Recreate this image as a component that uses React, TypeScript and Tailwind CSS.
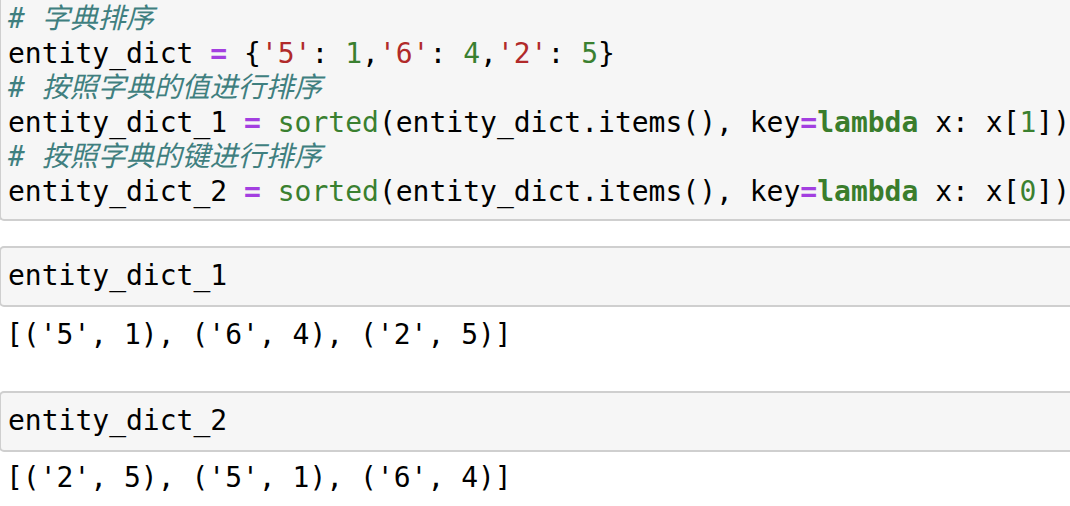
import React from 'react';

const mono = "font-['DejaVu_Sans_Mono','Noto_Sans_CJK_SC',monospace]";

const C = ({ children }: { children: React.ReactNode }) => (
  <span className="italic text-[#3f7f7f]">{children}</span>
);
const S = ({ children }: { children: React.ReactNode }) => (
  <span className="text-[#b12a2a]">{children}</span>
);
const N = ({ children }: { children: React.ReactNode }) => (
  <span className="text-[#3a8030]">{children}</span>
);
const Op = ({ children }: { children: React.ReactNode }) => (
  <span className="font-bold text-[#a33fe0]">{children}</span>
);
const Kw = ({ children }: { children: React.ReactNode }) => (
  <span className="font-bold text-[#3a7d2c]">{children}</span>
);

function Line({ children }: { children: React.ReactNode }) {
  return <div className="h-[34.5px] whitespace-pre">{children}</div>;
}

export default function App() {
  return (
    <div className={`w-[1070px] h-[506px] overflow-hidden bg-white text-[28px] leading-[34.5px] text-black ${mono}`}>
      {/* first input cell, its top is cut off */}
      <div className="ml-[-1px] w-[1100px] bg-[#f6f6f6] border-l-2 border-b-2 border-[#cfcfcf] rounded-bl-[5px] pl-[7px] pt-[2px] pb-[10px]">
        <Line><C># 字典排序</C></Line>
        <Line>
          entity_dict <Op>=</Op> {'{'}<S>'5'</S>: <N>1</N>,<S>'6'</S>: <N>4</N>,<S>'2'</S>: <N>5</N>{'}'}
        </Line>
        <Line><C># 按照字典的值进行排序</C></Line>
        <Line>
          entity_dict_1 <Op>=</Op> <N>sorted</N>(entity_dict.items(), key<Op>=</Op><Kw>lambda</Kw> x: x[<N>1</N>])
        </Line>
        <Line><C># 按照字典的键进行排序</C></Line>
        <Line>
          entity_dict_2 <Op>=</Op> <N>sorted</N>(entity_dict.items(), key<Op>=</Op><Kw>lambda</Kw> x: x[<N>0</N>])
        </Line>
      </div>

      <div className="h-[25px]" />

      <div className="ml-[-1px] w-[1100px] bg-[#f6f6f6] border-2 border-[#cfcfcf] rounded-[5px] pl-[7px] py-[11px]">
        <Line>entity_dict_1</Line>
      </div>
      <div className="pl-[6px] pt-[11px] pb-[39px]">
        <Line>[('5', 1), ('6', 4), ('2', 5)]</Line>
      </div>

      <div className="ml-[-1px] w-[1100px] bg-[#f6f6f6] border-2 border-[#cfcfcf] rounded-[5px] pl-[7px] py-[11px]">
        <Line>entity_dict_2</Line>
      </div>
      <div className="pl-[6px] pt-[9px]">
        <Line>[('2', 5), ('5', 1), ('6', 4)]</Line>
      </div>
    </div>
  );
}
